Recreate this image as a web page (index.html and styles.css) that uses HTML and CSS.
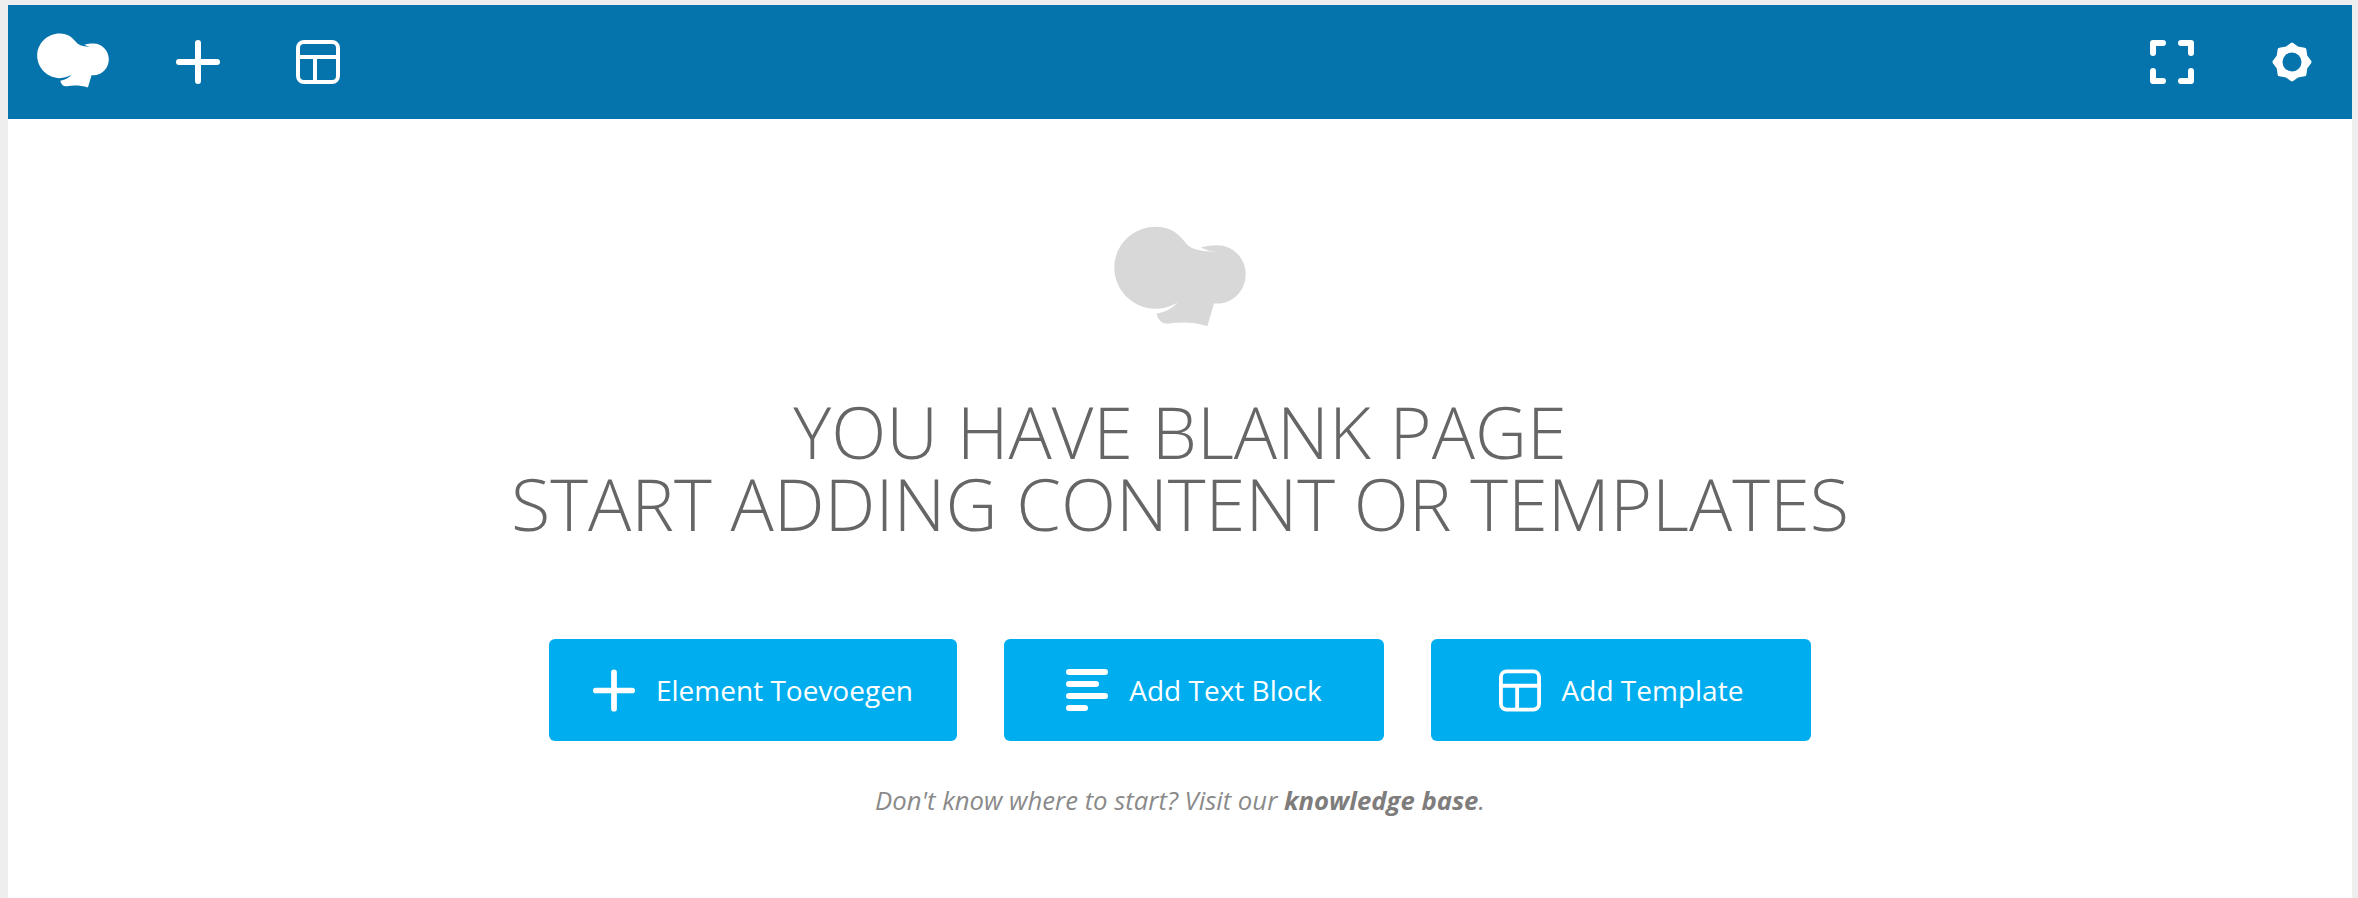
FILE: index.html
```html
<!DOCTYPE html>
<html lang="en">
<head>
    <meta charset="UTF-8">
    <title>Blank Page</title>
    <link rel="stylesheet" href="styles.css">
</head>
<body>
    <svg class="icon-defs" width="0" height="0">
        <symbol id="logo" viewBox="100 48 396 302">
            <path d="M225 50C270 50 295 72 312 95C325 112 345 125 410 125C395 125 375 120 360 112C375 107 395 105 410 105C458 105 495 145 495 192C495 240 458 280 410 280L400 280L380 348C340 335 300 335 265 340C245 343 232 330 228 310C250 308 275 295 290 278C265 292 245 296 225 296C157 296 101 240 101 172C101 105 157 50 225 50Z"/>
        </symbol>
        <symbol id="plus" viewBox="0 0 44 44">
            <path d="M22 3V41M3 22H41" fill="none" stroke="currentColor" stroke-width="6" stroke-linecap="round"/>
        </symbol>
        <symbol id="template" viewBox="0 0 44 44">
            <rect x="2" y="2" width="40" height="40" rx="6" fill="none" stroke="currentColor" stroke-width="4"/>
            <path d="M2 17H42M19 17V42" fill="none" stroke="currentColor" stroke-width="4"/>
        </symbol>
        <symbol id="fullscreen" viewBox="0 0 44 44">
            <path d="M3 13V3H13M31 3H41V13M41 31V41H31M13 41H3V31" fill="none" stroke="currentColor" stroke-width="6" stroke-linecap="round" stroke-linejoin="round"/>
        </symbol>
        <symbol id="gear" viewBox="0 0 40 40">
            <path fill="currentColor" stroke="currentColor" stroke-width="4" stroke-linejoin="round" fill-rule="evenodd" d="M37.5 20L33.4 25.55L32.37 32.37L25.55 33.4L20 37.5L14.45 33.4L7.63 32.37L6.6 25.55L2.5 20L6.6 14.45L7.63 7.63L14.45 6.6L20 2.5L25.55 6.6L32.37 7.63L33.4 14.45ZM20 8.5A11.5 11.5 0 1 0 20 31.5A11.5 11.5 0 1 0 20 8.5Z"/>
        </symbol>
    </svg>

    <div class="page">
        <header class="topbar">
            <div class="topbar-group">
                <svg class="topbar-logo"><use href="#logo"/></svg>
                <svg class="topbar-icon"><use href="#plus"/></svg>
                <svg class="topbar-icon"><use href="#template"/></svg>
            </div>
            <div class="topbar-group topbar-right">
                <svg class="topbar-icon"><use href="#fullscreen"/></svg>
                <svg class="topbar-gear"><use href="#gear"/></svg>
            </div>
        </header>

        <main class="blank">
            <svg class="blank-logo"><use href="#logo"/></svg>
            <h1 class="blank-title">You have blank page<br>Start adding content or templates</h1>

            <div class="blank-actions">
                <a class="action action-wide" href="#">
                    <svg class="action-icon"><use href="#plus"/></svg>
                    <span>Element Toevoegen</span>
                </a>
                <a class="action" href="#">
                    <span class="lines">
                        <i class="line"></i>
                        <i class="line line-mid"></i>
                        <i class="line"></i>
                        <i class="line line-short"></i>
                    </span>
                    <span>Add Text Block</span>
                </a>
                <a class="action" href="#">
                    <svg class="action-icon"><use href="#template"/></svg>
                    <span>Add Template</span>
                </a>
            </div>

            <p class="blank-note">Don't know where to start? Visit our <b>knowledge base</b>.</p>
        </main>
    </div>
</body>
</html>
```

FILE: styles.css
```css
html, body {
    height: 100%;
}

body {
    margin: 0;
    padding: 5px 6px 0 8px;
    box-sizing: border-box;
    background-color: #eeeeee;
    font-family: "Open Sans", "Liberation Sans", sans-serif;
    overflow: hidden;
}

.icon-defs {
    position: absolute;
}

.page {
    height: 100%;
    background-color: #fff;
}

.topbar {
    display: flex;
    justify-content: space-between;
    align-items: center;
    height: 114px;
    padding: 0 40px 0 29px;
    background-color: #0574ac;
    color: #fff;
}

.topbar-group {
    display: flex;
    align-items: center;
    gap: 76px;
}

.topbar-right {
    gap: 78px;
}

.topbar-logo {
    width: 72px;
    height: 55px;
    margin-top: -3px;
    margin-right: -9px;
    fill: #fff;
}

.topbar-icon {
    width: 44px;
    height: 44px;
}

.topbar-gear {
    width: 40px;
    height: 40px;
}

.blank {
    display: flex;
    flex-direction: column;
    align-items: center;
    padding-top: 107px;
}

.blank-logo {
    width: 132px;
    height: 101px;
    fill: #d8d8d8;
}

.blank-title {
    margin: 68px 0 0;
    font-size: 72px;
    font-weight: 300;
    line-height: 72px;
    text-align: center;
    text-transform: uppercase;
    color: #666;
}

.blank-actions {
    display: flex;
    gap: 47px;
    margin-top: 100px;
}

.action {
    display: flex;
    justify-content: center;
    align-items: center;
    gap: 21px;
    width: 380px;
    height: 102px;
    border-radius: 6px;
    background-color: #00aeef;
    color: #fff;
    font-size: 28px;
    text-decoration: none;
}

.action-wide {
    width: 408px;
}

.action-icon {
    width: 42px;
    height: 43px;
}

.lines {
    display: flex;
    flex-direction: column;
    gap: 6.33px;
    width: 42px;
}

.line {
    display: block;
    width: 42px;
    height: 6px;
    border-radius: 3px;
    background-color: #fff;
}

.line-mid {
    width: 33px;
}

.line-short {
    width: 22px;
}

.blank-note {
    margin: 42px 0 0;
    font-size: 25.7px;
    font-style: italic;
    color: #8a8a8a;
}

.blank-note b {
    color: #7f7c7c;
}
```
